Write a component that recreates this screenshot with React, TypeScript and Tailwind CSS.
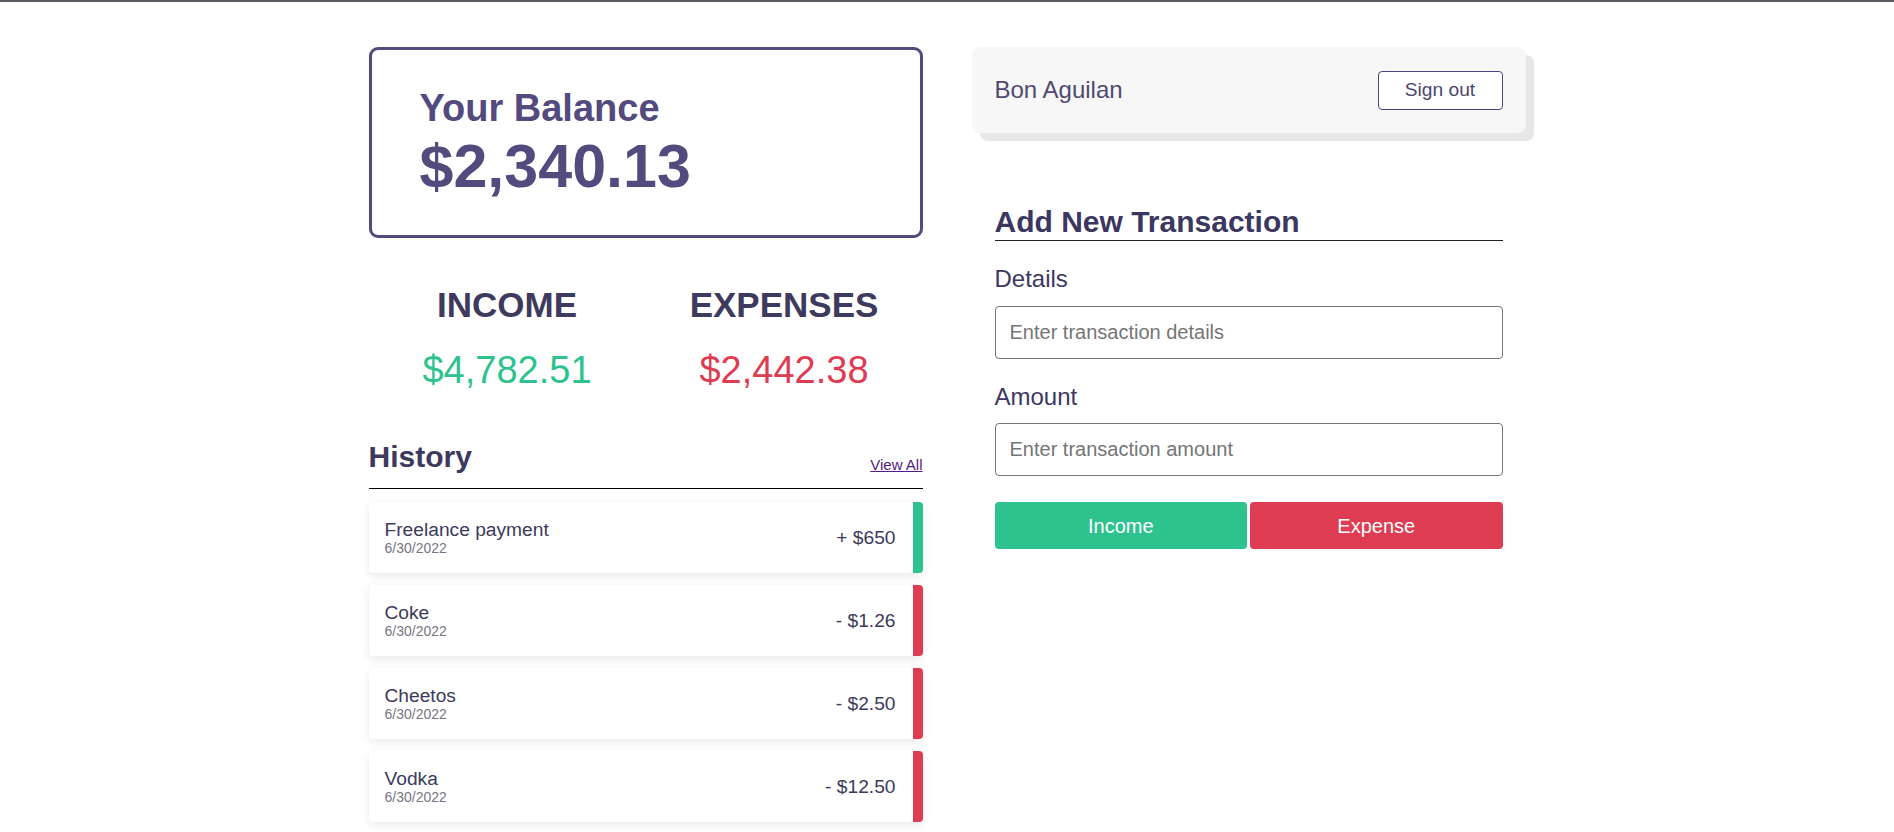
import { useState } from "react";

type Tx = { id: number; name: string; date: string; amount: number };

const history: Tx[] = [
  { id: 1, name: "Freelance payment", date: "6/30/2022", amount: 650 },
  { id: 2, name: "Coke", date: "6/30/2022", amount: -1.26 },
  { id: 3, name: "Cheetos", date: "6/30/2022", amount: -2.5 },
  { id: 4, name: "Vodka", date: "6/30/2022", amount: -12.5 },
];

function formatAmount(n: number) {
  const abs = Math.abs(n);
  const str = Number.isInteger(abs) ? abs.toString() : abs.toFixed(2);
  return `${n >= 0 ? "+" : "-"} $${str}`;
}

function HistoryItem({ tx }: { tx: Tx }) {
  const isIncome = tx.amount >= 0;
  return (
    <div className="flex h-[71px] rounded-[4px] bg-white shadow-[0_3px_10px_rgba(0,0,0,0.09)]">
      <div className="flex flex-1 items-center justify-between pl-[16px] pr-[17px]">
        <div className="flex flex-col">
          <span className="text-[19.2px] leading-none text-[#3b3a5a]">{tx.name}</span>
          <span className="mt-[2px] text-[14px] leading-none text-[#77757f]">{tx.date}</span>
        </div>
        <span className="text-[19.2px] leading-none text-[#3b3a5a]">{formatAmount(tx.amount)}</span>
      </div>
      <div
        className={
          isIncome
            ? "w-[10px] rounded-r-[4px] bg-[#2ec28f]"
            : "w-[10px] rounded-r-[4px] bg-[#de3c53]"
        }
      />
    </div>
  );
}

export default function App() {
  const [details, setDetails] = useState("");
  const [amount, setAmount] = useState("");

  return (
    <div className="min-h-[832px] bg-white font-['Liberation_Sans',Arial,sans-serif]">
      <div className="h-[2px] bg-[#5e5c62]" />
      <div className="mt-[45px] flex justify-center gap-[49px]">
        {/* Left column: balance, totals, history */}
        <div className="w-[554px]">
          <div className="flex h-[191px] flex-col justify-center rounded-[9px] border-[3px] border-[#534a7e] px-[48px]">
            <h2 className="text-[38px] font-bold leading-none text-[#534a7e]">Your Balance</h2>
            <p className="mt-[9px] text-[61px] font-bold leading-none text-[#534a7e]">$2,340.13</p>
          </div>

          <div className="mt-[49px] grid grid-cols-2 text-center">
            <div>
              <h3 className="text-[35px] font-bold leading-none text-[#3d3a5e]">INCOME</h3>
              <p className="mt-[29px] text-[38px] leading-none text-[#2ec28f]">$4,782.51</p>
            </div>
            <div>
              <h3 className="text-[35px] font-bold leading-none text-[#3d3a5e]">EXPENSES</h3>
              <p className="mt-[29px] text-[38px] leading-none text-[#de3c53]">$2,442.38</p>
            </div>
          </div>

          <div className="mt-[53px] flex items-end justify-between border-b border-black pb-[16px]">
            <h3 className="text-[30px] font-bold leading-none text-[#3d3a5e]">History</h3>
            <a href="#" className="text-[15px] leading-none text-[#551a8b] underline">
              View All
            </a>
          </div>

          <div className="mt-[13px] flex flex-col gap-[12px]">
            {history.map((tx) => (
              <HistoryItem key={tx.id} tx={tx} />
            ))}
          </div>
        </div>

        {/* Right column: user card and form */}
        <div className="w-[554px]">
          <div className="flex h-[86px] items-center justify-between rounded-[8px] bg-[#f7f7f7] px-[23px] shadow-[8px_8px_0_#e7e7e7]">
            <span className="text-[24px] text-[#504a6e]">Bon Aguilan</span>
            <button className="h-[39px] w-[125px] rounded-[4px] border border-[#4b4584] bg-white text-[19.2px] text-[#4a4670]">
              Sign out
            </button>
          </div>

          <div className="mx-[23px] mt-[74px]">
            <h3 className="border-b border-[#222] pb-[3px] text-[30px] font-bold leading-none text-[#3b3760]">
              Add New Transaction
            </h3>

            <label className="mt-[26px] block text-[24px] leading-none text-[#3b3760]">Details</label>
            <input
              value={details}
              onChange={(e) => setDetails(e.target.value)}
              placeholder="Enter transaction details"
              className="mt-[15px] block h-[53px] w-full rounded-[4px] border border-[#767676] px-[14px] text-[20px] text-[#333] outline-none placeholder:text-[#757575]"
            />

            <label className="mt-[26px] block text-[24px] leading-none text-[#3b3760]">Amount</label>
            <input
              value={amount}
              onChange={(e) => setAmount(e.target.value)}
              placeholder="Enter transaction amount"
              className="mt-[14px] block h-[53px] w-full rounded-[4px] border border-[#767676] px-[14px] text-[20px] text-[#333] outline-none placeholder:text-[#757575]"
            />

            <div className="mt-[26px] flex gap-[3px]">
              <button className="h-[47px] flex-1 rounded-[4px] bg-[#2ec28f] text-[20px] text-white">Income</button>
              <button className="h-[47px] flex-1 rounded-[4px] bg-[#de3c53] text-[20px] text-white">Expense</button>
            </div>
          </div>
        </div>
      </div>
    </div>
  );
}
